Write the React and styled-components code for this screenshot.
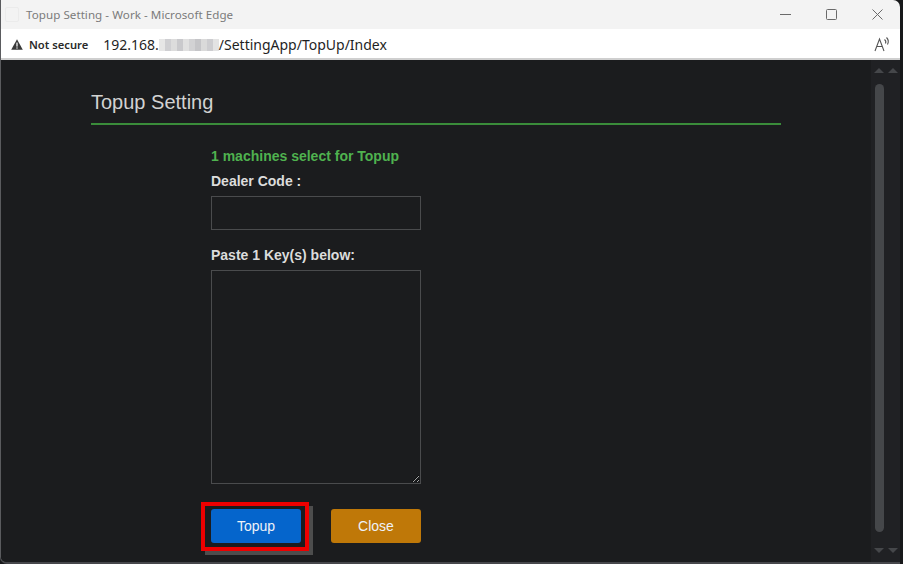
import React from "react";
import styled, { createGlobalStyle } from "styled-components";

const Global = createGlobalStyle`
  html, body { margin: 0; padding: 0; overflow: hidden; background: #1e1f22; }
  * { box-sizing: border-box; }
`;

const Screen = styled.div`
  width: 903px;
  height: 564px;
  display: flex;
  background: #17181a;
`;

const Window = styled.div`
  width: 900px;
  height: 564px;
  display: flex;
  flex-direction: column;
  border-top-right-radius: 7px;
  border-bottom-left-radius: 7px;
  overflow: hidden;
  border-left: 1px solid #5a5b5e;
  border-bottom: 2px solid #46474b;
`;

const TitleBar = styled.div`
  height: 29px;
  flex: none;
  background: #f3f3f3;
  display: flex;
  align-items: center;
  font-family: "Noto Sans", "Open Sans", sans-serif;
  font-size: 11.6px;
  color: #7b7b7b;
`;

const AppIcon = styled.div`
  width: 14px;
  height: 15px;
  margin: 0 7px 0 4px;
  border: 1px solid #ebebeb;
  border-radius: 2px;
`;

const Title = styled.span`
  flex: 1;
  letter-spacing: 0.05px;
`;

const Controls = styled.div`
  display: flex;
  align-items: center;
  color: #6a6a6a;
`;

const CtrlBtn = styled.div`
  width: 46px;
  height: 29px;
  display: flex;
  align-items: center;
  justify-content: center;
`;

const AddressBar = styled.div`
  height: 31px;
  flex: none;
  background: #ffffff;
  border-bottom: 2px solid #cfcfcf;
  display: flex;
  align-items: center;
  padding: 1px 8px 0 10px;
  font-family: "Noto Sans", "Open Sans", sans-serif;
`;

const Security = styled.div`
  display: flex;
  align-items: center;
  gap: 6px;
  font-size: 11.2px;
  font-weight: 600;
  color: #2a2a2a;
  margin-right: 15px;
`;

const Url = styled.div`
  flex: 1;
  display: flex;
  align-items: center;
  font-size: 14px;
  color: #1f1f1f;
`;

const Blur = styled.span`
  display: inline-flex;
  width: 60px;
  height: 12px;
  margin-top: 2px;
`;

const BlurCell = styled.span`
  flex: 1;
  height: 100%;
  background: ${(p) => p.$c};
`;

const Content = styled.div`
  flex: 1;
  display: flex;
  background: #1b1c1e;
  min-height: 0;
`;

const Main = styled.div`
  flex: 1;
  padding: 30px 90px 0 90px;
  font-family: "Liberation Sans", Arial, sans-serif;
`;

const Heading = styled.h2`
  margin: 0;
  font-weight: normal;
  font-size: 20px;
  line-height: 24px;
  color: #d2d2d2;
  padding-bottom: 9px;
  border-bottom: 2px solid #3a8c3a;
`;

const Form = styled.div`
  margin: 21px 0 0 120px;
  width: 210px;
  display: flex;
  flex-direction: column;
`;

const Notice = styled.div`
  font-size: 14px;
  font-weight: bold;
  line-height: 20px;
  color: #4fb24f;
`;

const Label = styled.label`
  font-size: 14px;
  font-weight: bold;
  line-height: 20px;
  color: #dcdcdc;
  margin-top: ${(p) => p.$mt || 0}px;
`;

const Input = styled.input`
  margin-top: 5px;
  width: 210px;
  height: 34px;
  background: #1b1c1e;
  border: 1px solid #4a4b4d;
  color: #ddd;
  outline: none;
`;

const TextArea = styled.textarea`
  margin-top: 5px;
  width: 210px;
  height: 214px;
  background: #1b1c1e;
  border: 1px solid #4a4b4d;
  color: #ddd;
  outline: none;
  color-scheme: dark;
`;

const Buttons = styled.div`
  margin-top: 25px;
  display: flex;
  gap: 30px;
`;

const Btn = styled.button`
  position: relative;
  width: 90px;
  height: 34px;
  border: none;
  border-radius: 3px;
  background: ${(p) => p.$bg};
  color: #eef2f8;
  font-family: "Liberation Sans", Arial, sans-serif;
  font-size: 14px;
  cursor: pointer;
`;

const Highlight = styled.span`
  position: absolute;
  left: -10px;
  top: -7px;
  width: 108px;
  height: 49px;
  border: 4px solid #ee0000;
  box-shadow: 4px 4px 0 #4d4d4d;
  pointer-events: none;
`;

const ScrollArea = styled.div`
  width: 29px;
  flex: none;
  background: #202124;
  display: flex;
  padding: 8px 0 9px 2px;
`;

const ScrollCol = styled.div`
  width: ${(p) => p.$w}px;
  display: flex;
  flex-direction: column;
  align-items: center;
  justify-content: space-between;
`;

const Arrow = styled.div`
  width: 0;
  height: 0;
  border-left: 5px solid transparent;
  border-right: 5px solid transparent;
  ${(p) =>
    p.$down
      ? "border-top: 5px solid #45474a;"
      : "border-bottom: 5px solid #45474a;"}
`;

const Thumb = styled.div`
  flex: 1;
  width: 9px;
  margin: 11px 0 16px;
  border-radius: 5px;
  background: #45474a;
`;

const blurColors = ["#e6e6e6", "#cfcfd2", "#dcdcdc", "#c9c9cc", "#e0e0e0", "#d2d2d4", "#c5c5c8", "#dadada", "#cdcdd0", "#e3e3e3"];

export default function App() {
  return (
    <>
      <Global />
      <Screen>
        <Window>
          <TitleBar>
            <AppIcon />
            <Title>Topup Setting - Work - Microsoft Edge</Title>
            <Controls>
              <CtrlBtn>
                <svg width="11" height="11" viewBox="0 0 11 11">
                  <line x1="0" y1="5.5" x2="11" y2="5.5" stroke="currentColor" strokeWidth="1" />
                </svg>
              </CtrlBtn>
              <CtrlBtn>
                <svg width="11" height="11" viewBox="0 0 11 11">
                  <rect x="0.5" y="0.5" width="10" height="10" rx="1" fill="none" stroke="currentColor" strokeWidth="1" />
                </svg>
              </CtrlBtn>
              <CtrlBtn>
                <svg width="11" height="11" viewBox="0 0 11 11">
                  <path d="M0.5 0.5 L10.5 10.5 M10.5 0.5 L0.5 10.5" stroke="currentColor" strokeWidth="1" />
                </svg>
              </CtrlBtn>
            </Controls>
          </TitleBar>
          <AddressBar>
            <Security>
              <svg width="12" height="11" viewBox="0 0 12 11">
                <path d="M6 0.3 L11.8 10.7 L0.2 10.7 Z" fill="#3a3a3a" />
                <rect x="5.4" y="3.6" width="1.2" height="4" fill="#fff" />
                <rect x="5.4" y="8.4" width="1.2" height="1.2" fill="#fff" />
              </svg>
              Not secure
            </Security>
            <Url>
              192.168.
              <Blur>
                {blurColors.map((c, i) => (
                  <BlurCell key={i} $c={c} />
                ))}
              </Blur>
              /SettingApp/TopUp/Index
            </Url>
            <svg width="18" height="16" viewBox="0 0 18 16">
              <path d="M1 15 L5.5 3 L10 15 M2.8 10.5 H8.2" fill="none" stroke="#555" strokeWidth="1.1" />
              <path d="M10.5 3.5 Q12.5 5 11.5 7.5" fill="none" stroke="#555" strokeWidth="1.1" />
              <path d="M12.5 1.5 Q15.5 4.5 13.5 8.5" fill="none" stroke="#555" strokeWidth="1.1" />
            </svg>
          </AddressBar>
          <Content>
            <Main>
              <Heading>Topup Setting</Heading>
              <Form>
                <Notice>1 machines select for Topup</Notice>
                <Label $mt={5}>Dealer Code :</Label>
                <Input type="text" />
                <Label $mt={15}>Paste 1 Key(s) below:</Label>
                <TextArea />
                <Buttons>
                  <Btn $bg="#0565cc">
                    Topup
                    <Highlight />
                  </Btn>
                  <Btn $bg="#bf7808">Close</Btn>
                </Buttons>
              </Form>
            </Main>
            <ScrollArea>
              <ScrollCol $w={14}>
                <Arrow />
                <Thumb />
                <Arrow $down />
              </ScrollCol>
              <ScrollCol $w={17}>
                <Arrow />
                <Arrow $down />
              </ScrollCol>
            </ScrollArea>
          </Content>
        </Window>
      </Screen>
    </>
  );
}
